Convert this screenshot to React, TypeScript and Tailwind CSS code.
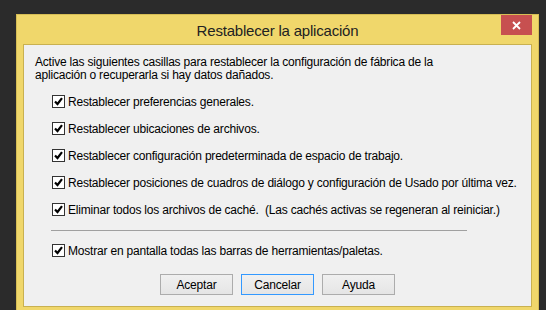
import { useState } from 'react';

const options = [
	'Restablecer preferencias generales.',
	'Restablecer ubicaciones de archivos.',
	'Restablecer configuración predeterminada de espacio de trabajo.',
	'Restablecer posiciones de cuadros de diálogo y configuración de Usado por última vez.',
	'Eliminar todos los archivos de caché.  (Las cachés activas se regeneran al reiniciar.)',
];

function CheckRow({ label, checked, onToggle }: { label: string; checked: boolean; onToggle: () => void }) {
	return (
		<label className="flex h-[27px] items-center gap-[3px] cursor-default">
			<button
				type="button"
				onClick={onToggle}
				className="flex h-[13px] w-[13px] shrink-0 items-center justify-center border border-[#333333] bg-white"
			>
				{checked && (
					<svg width="9" height="9" viewBox="0 0 9 9" aria-hidden="true">
						<path d="M1 4.5 L3.5 7 L8 1.2" fill="none" stroke="#000" strokeWidth="2.2" />
					</svg>
				)}
			</button>
			<span className="whitespace-pre">{label}</span>
		</label>
	);
}

function DialogButton({ children, focused }: { children: React.ReactNode; focused?: boolean }) {
	return (
		<button
			type="button"
			className={
				focused
					? 'h-[21px] w-[73px] border border-[#3399ff] bg-gradient-to-b from-[#f0f0f0] to-[#e5e5e5] text-[12px] leading-none text-black'
					: 'h-[21px] w-[73px] border border-[#acacac] bg-gradient-to-b from-[#f0f0f0] to-[#e5e5e5] text-[12px] leading-none text-black'
			}
		>
			{children}
		</button>
	);
}

export default function App() {
	const [checks, setChecks] = useState([true, true, true, true, true]);
	const [showBars, setShowBars] = useState(true);

	const toggle = (i: number) => setChecks((c) => c.map((v, j) => (j === i ? !v : v)));

	return (
		<div
			className="h-[310px] w-[546px] overflow-hidden bg-[#2b2b2b] pl-[16px] pt-[14px] text-[12px] tracking-[-0.2px] text-black"
			style={{ fontFamily: '"Liberation Sans", Arial, sans-serif' }}
		>
			<div className="h-[320px] w-[523px] border border-[#d6bd55] bg-[#f0d76b]">
				<div className="relative flex h-[29px] items-center justify-center pt-[1px]">
					<span className="text-[15px] leading-none text-[#222222]">Restablecer la aplicación</span>
					<button
						type="button"
						className="absolute right-[6px] top-0 flex h-[20px] w-[31px] items-center justify-center bg-[#c75050]"
					>
						<svg width="9" height="9" viewBox="0 0 9 9" aria-hidden="true">
							<path d="M1 1 L8 8 M8 1 L1 8" stroke="#fff" strokeWidth="1.8" />
						</svg>
					</button>
				</div>
				<div className="mx-[6px] flex flex-col border border-[#c9b150] bg-[#f0f0f0] pb-[11px] pl-[11px] pt-[11px]">
					<p className="whitespace-nowrap leading-[13px]">
						Active las siguientes casillas para restablecer la configuración de fábrica de la
						<br />
						aplicación o recuperarla si hay datos dañados.
					</p>
					<div className="ml-[17px] mt-[6px] flex flex-col">
						{options.map((o, i) => (
							<CheckRow key={o} label={o} checked={checks[i]} onToggle={() => toggle(i)} />
						))}
					</div>
					<div className="ml-[16px] mt-[7px] h-px w-[416px] bg-[#a0a0a0]" />
					<div className="ml-[17px] mt-[6px]">
						<CheckRow
							label="Mostrar en pantalla todas las barras de herramientas/paletas."
							checked={showBars}
							onToggle={() => setShowBars(!showBars)}
						/>
					</div>
					<div className="mt-[10px] flex justify-center gap-[8px] pr-[11px]">
						<DialogButton>Aceptar</DialogButton>
						<DialogButton focused>Cancelar</DialogButton>
						<DialogButton>Ayuda</DialogButton>
					</div>
				</div>
			</div>
		</div>
	);
}
